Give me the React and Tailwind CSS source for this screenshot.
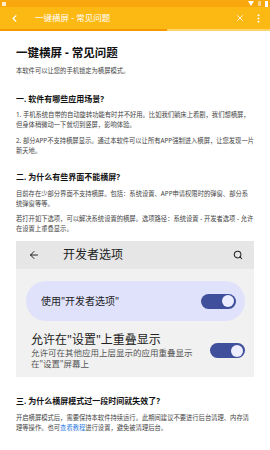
import { ChevronLeft, X, ArrowLeft, Search } from 'lucide-react'

const font = { fontFamily: '"Noto Sans", "Noto Sans CJK SC", sans-serif' }

function Toggle() {
  return (
    <div className="w-[35px] h-[15px] rounded-full bg-[#3f4f9b] flex items-center justify-end pr-[2px]">
      <div className="w-[12px] h-[12px] rounded-full bg-[#eceeff]" />
    </div>
  )
}

export default function App() {
  return (
    <div className="w-[270px] h-[450px] bg-white overflow-hidden text-[#222]" style={font}>
      {/* status bar */}
      <div className="h-[7px] bg-[#f8a80c] flex items-center justify-between px-[2px]">
        <div className="w-[4px] h-[4px] bg-white/80" />
        <div className="flex items-center gap-[4px]">
          <svg width="6" height="5" viewBox="0 0 6 5"><path d="M0 0h6L3 5z" fill="#fff" /></svg>
          <div className="w-[3px] h-[5px] bg-white/50" />
          <div className="w-[3px] h-[6px] bg-white border border-white/60" />
        </div>
      </div>
      {/* toolbar */}
      <div className="h-[22px] bg-[#fdb913] flex items-center text-white">
        <ChevronLeft size={11} strokeWidth={2.5} className="ml-[9px]" />
        <span className="ml-[15px] text-[8.5px] leading-none">一键横屏 - 常见问题</span>
        <X size={10} strokeWidth={2} className="ml-auto mr-[12px]" />
        <svg width="3" height="9" viewBox="0 0 3 9" className="mr-[10px]">
          <circle cx="1.5" cy="1.2" r="1" fill="#fff" />
          <circle cx="1.5" cy="4.5" r="1" fill="#fff" />
          <circle cx="1.5" cy="7.8" r="1" fill="#fff" />
        </svg>
      </div>
      <div className="h-[2px] bg-[#fdd36a] flex">
        <div className="w-[167px] bg-[#f49a00]" />
      </div>

      <div className="px-4">
        <h1 className="mt-[14px] text-[11.5px] leading-[15px] font-bold text-[#111]">一键横屏 - 常见问题</h1>
        <p className="mt-[6px] text-[6.3px] leading-[10px] text-[#444]">本软件可以让您的手机锁定为横屏模式。</p>

        <h2 className="mt-[17px] text-[8px] leading-[12px] font-bold text-[#111]">一. 软件有哪些应用场景?</h2>
        <p className="mt-[5px] text-[6.3px] leading-[9.5px] text-[#444]">1. 手机系统自带的自动旋转功能有时并不好用。比如我们躺床上看剧，我们想横屏，但身体稍微动一下就切到竖屏，影响体验。</p>
        <p className="mt-[7px] text-[6.3px] leading-[9.5px] text-[#444]">2. 部分APP不支持横屏显示。通过本软件可以让所有APP强制进入横屏，让您发现一片新天地。</p>

        <h2 className="mt-[16px] text-[8px] leading-[12px] font-bold text-[#111]">二. 为什么有些界面不能横屏?</h2>
        <p className="mt-[6px] text-[6.3px] leading-[9.5px] text-[#444]">目前存在少部分界面不支持横屏。包括：系统设置、APP申请权限时的弹窗、部分系统弹窗等等。</p>
        <p className="mt-[6px] text-[6.3px] leading-[9.5px] text-[#444]">若打开如下选项，可以解决系统设置的横屏。选项路径：系统设置 - 开发者选项 - 允许在设置上重叠显示。</p>

        {/* screenshot of settings */}
        <div className="mt-[8px] h-[136px] bg-[#f1f1f1] flex flex-col">
          <div className="h-[28px] bg-[#e6e6e6] flex items-center text-[#222]">
            <ArrowLeft size={12} strokeWidth={2} className="ml-[12px]" />
            <span className="ml-[23px] text-[12px] leading-none">开发者选项</span>
            <Search size={10} strokeWidth={2.5} className="ml-auto mr-[11px]" />
          </div>
          <div className="mt-[12px] ml-[10px] mr-[9px] h-[40px] rounded-[20px] bg-[#e0e1fb] flex items-center pl-[15px] pr-[9px]">
            <span className="text-[10px] leading-none text-[#222]">使用"开发者选项"</span>
            <div className="ml-auto"><Toggle /></div>
          </div>
          <div className="mt-[11px] pl-[15px] pr-[9px] flex items-center">
            <div className="flex flex-col">
              <span className="text-[12px] leading-[15px] text-[#222]">允许在"设置"上重叠显示</span>
              <span className="text-[8.5px] leading-[11px] text-[#555]">允许可在其他应用上层显示的应用重叠显示<br />在"设置"屏幕上</span>
            </div>
            <div className="ml-auto"><Toggle /></div>
          </div>
        </div>

        <h2 className="mt-[18px] text-[8px] leading-[12px] font-bold text-[#111]">三. 为什么横屏模式过一段时间就失效了?</h2>
        <div className="mt-[6px] text-[6.3px] leading-[10px] text-[#444]">
          <div>开启横屏模式后，需要保持本软件持续运行。此期间建议不要进行后台清理、内存清</div>
          <div>理等操作。也可<a className="text-[#2f7de1]">查看教程</a>进行设置，避免被清理后台。</div>
        </div>
      </div>
    </div>
  )
}
